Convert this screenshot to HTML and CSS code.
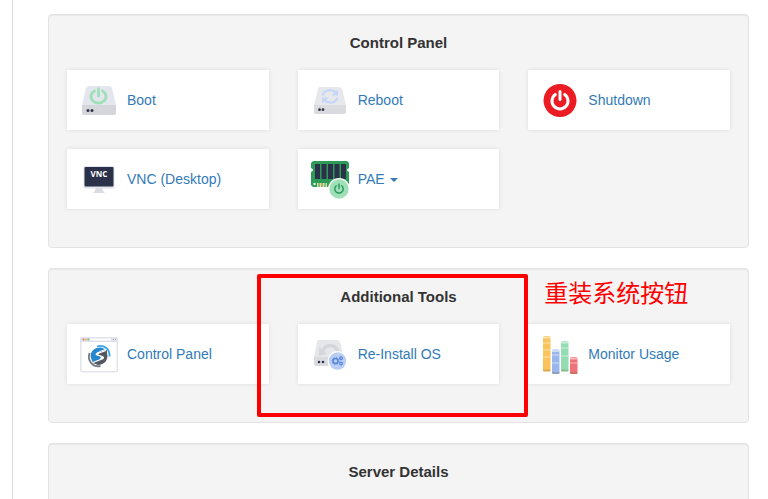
FILE: index.html
```html
<!DOCTYPE html>
<html lang="en">
<head>
    <meta charset="UTF-8">
    <meta name="viewport" content="width=device-width, initial-scale=1.0">
    <title>Control Panel</title>
    <link rel="stylesheet" href="styles.css">
</head>
<body>
    <main class="content">
        <section class="well">
            <h2>Control Panel</h2>
            <div class="tools">
                <a class="tool" href="#boot">
                    <svg class="icon" viewBox="0 0 40 40" aria-hidden="true">
                        <path d="M10 6h20q2 0 3 2l4 17v2H3v-2L7 8q1-2 3-2z" fill="#e3e6ec"/>
                        <path d="M3 25h34v8q0 2-2 2H5q-2 0-2-2z" fill="#d4d6dc"/>
                        <circle cx="9" cy="30.5" r="1.5" fill="#33364a"/>
                        <circle cx="13" cy="30.5" r="1.5" fill="#33364a"/>
                        <path d="M15.500 11A7.500 6.500 0 1 0 23.500 11M19.500 9v7" fill="none" stroke="#9fe0b9" stroke-width="2.800" stroke-linecap="round"/>
                    </svg>
                    <span>Boot</span>
                </a>
                <a class="tool" href="#reboot">
                    <svg class="icon" viewBox="0 0 40 40" aria-hidden="true">
                        <path d="M10 7h19q2 0 3 2l4 16v2H4v-2L8 9q0-2 2-2z" fill="#e7e8ec"/>
                        <path d="M4 25h32v7q0 2-2 2H6q-2 0-2-2z" fill="#d9dbdf"/>
                        <circle cx="9.500" cy="29.700" r="1.400" fill="#33364a"/>
                        <circle cx="13" cy="29.700" r="1.400" fill="#33364a"/>
                        <path d="M12.500 15.500C14 9.500 22 8.500 26 13M27.500 17.500C26 23.500 18 24 14 20" fill="none" stroke="#c5d6f8" stroke-width="2.200"/>
                        <path d="M28 9.500v6h-7zM12 23.500v-6h7z" fill="#c5d6f8"/>
                    </svg>
                    <span>Reboot</span>
                </a>
                <a class="tool" href="#shutdown">
                    <svg class="icon" viewBox="0 0 40 40" aria-hidden="true">
                        <circle cx="20" cy="20.500" r="16.500" fill="#ec1c24"/>
                        <path d="M15.300 14.500A8 8 0 1 0 24.700 14.500M20 11.500v8" fill="none" stroke="#fff" stroke-width="3" stroke-linecap="round"/>
                    </svg>
                    <span>Shutdown</span>
                </a>
                <a class="tool" href="#vnc">
                    <svg class="icon" viewBox="0 0 40 40" aria-hidden="true">
                        <path d="M17 28h6l1 4 2 2H14l2-2z" fill="#d8dbe1"/>
                        <rect x="4.500" y="7" width="31" height="22.500" rx="1.800" fill="#e1e4ea"/>
                        <rect x="5.500" y="8" width="29" height="19.500" rx="1" fill="#2b3149"/>
                        <text class="icon-text" x="20" y="18" text-anchor="middle">VNC</text>
                    </svg>
                    <span>VNC (Desktop)</span>
                </a>
                <button class="tool" type="button" aria-haspopup="true">
                    <svg class="icon" viewBox="0 0 40 40" aria-hidden="true">
                        <path d="M3 2h34l2 2v5q-2 1-2 2t2 2v15H3l-2-2V13q2-1 2-2T1 9V4z" fill="#2c9b58"/>
                        <path d="M5 5h5v15H5zM11.500 5h5v15h-5zM18 5h5v15h-5zM24.500 5h5v15h-5zM31 5h5v15h-5z" fill="#2b3149"/>
                        <path d="M7 24h10v4H7z" fill="#e9dda0"/>
                        <path d="M9 24v4M12 24v4M15 24v4" stroke="#2c9b58" stroke-width="1"/>
                        <circle cx="4.500" cy="25" r="1.300" fill="#d8f0df"/>
                        <circle cx="29" cy="30" r="11" fill="#fff"/>
                        <circle cx="29" cy="30" r="9.700" fill="#9fe0b9"/>
                        <path d="M26.300 26.700a4.200 4.200 0 1 0 5.400 0M29 25v4.500" fill="none" stroke="#2c9b58" stroke-width="1.500" stroke-linecap="round"/>
                    </svg>
                    <span>PAE <i class="caret"></i></span>
                </button>
            </div>
        </section>

        <section class="well">
            <h2>Additional Tools</h2>
            <div class="tools">
                <a class="tool" href="#panel">
                    <svg class="icon" viewBox="0 0 40 40" aria-hidden="true">
                        <rect x="1.800" y="3.800" width="36.500" height="34" rx="2" fill="#fff" stroke="#e2e4e8" stroke-width="1.500"/>
                        <path d="M3 3h34q2 0 2 2v3H1V5q0-2 2-2z" fill="#dfe2e8"/>
                        <rect x="11" y="4.500" width="21" height="2" rx="1" fill="#fff"/>
                        <circle cx="4.500" cy="5.500" r="1" fill="#ed7161"/>
                        <circle cx="7" cy="5.500" r="1" fill="#f1b661"/>
                        <circle cx="9.300" cy="5.500" r="1" fill="#75c78f"/>
                        <path d="M34 5.500h1M36 5.500h1" stroke="#a7abb5" stroke-width="1.200"/>
                        <path d="M18 12.500C25 10 31 15 30.500 22.500" fill="none" stroke="#35a7e5" stroke-width="1.800"/>
                        <path d="M10.500 19C8 27 14 33.500 21.500 32" fill="none" stroke="#777a80" stroke-width="1.800"/>
                        <path d="M12 24C10 18 16 13 22 13.500L26 15 18 18.500q-3 2 0 3l4 1q-1 5-8 6.500z" fill="#2687cf"/>
                        <path d="M28 19c2 7-3 12-9 12l-5-2 9-4q3-2 0-3l-4-1q1-4 9-5z" fill="#54575d"/>
                        <path d="M27 16.500l-7 2.500q-3 1.500 0 2.500l3 1q3 1 0 2.500l-9 3.500" fill="none" stroke="#fff" stroke-width="1.300"/>
                    </svg>
                    <span>Control Panel</span>
                </a>
                <div class="marked">
                    <a class="tool" href="#reinstall">
                        <svg class="icon" viewBox="0 0 40 40" aria-hidden="true">
                            <path d="M9 6h18q2 0 3 2l4 15v2H4v-2L7 8q0-2 2-2z" fill="#e6e7ea"/>
                            <path d="M4 23h30v9H6q-2 0-2-2z" fill="#d9dbdf"/>
                            <circle cx="9" cy="28" r="1.300" fill="#33364a"/>
                            <circle cx="13" cy="28" r="1.300" fill="#33364a"/>
                            <path d="M13 17C15 10 25 9 28 18" fill="none" stroke="#d3d6da" stroke-width="3.500"/>
                            <path d="M9 13v9l8-2z" fill="#d3d6da"/>
                            <circle cx="27.500" cy="27" r="10" fill="#fff"/>
                            <circle cx="27.500" cy="27" r="8.700" fill="#b9cdf5"/>
                            <g fill="none" stroke="#5b87d9">
                                <circle cx="25.500" cy="27" r="2.500" stroke-width="1.500"/>
                                <circle cx="25.500" cy="27" r="3.400" stroke-width="1" stroke-dasharray="1.300 1.400"/>
                                <circle cx="31" cy="24.300" r="1.300" stroke-width="1.300"/>
                                <circle cx="31" cy="29.500" r="1.300" stroke-width="1.300"/>
                            </g>
                        </svg>
                        <span>Re-Install OS</span>
                    </a>
                    <div class="mark">
                        <span class="mark-label" lang="zh-CN">重装系统按钮</span>
                    </div>
                </div>
                <a class="tool" href="#monitor">
                    <svg class="icon" viewBox="0 0 40 40" aria-hidden="true">
                        <rect x="3" y="2" width="7.500" height="35.500" rx="1.500" fill="#fac45c"/>
                        <rect x="12" y="15.500" width="7.500" height="24.500" rx="1.500" fill="#9ab6ec"/>
                        <rect x="21" y="7" width="7.500" height="30.500" rx="1.500" fill="#94dcb2"/>
                        <rect x="30" y="23" width="7.500" height="17" rx="1.500" fill="#ee7378"/>
                        <g fill="none" stroke="#fff" stroke-opacity=".5">
                            <path d="M3 3.500h7.500M12 17h7.500M21 8.500h7.500M30 24.500h7.500" stroke-width="2"/>
                            <path d="M3 9h7.500M3 16h7.500M3 23h7.500M12 21h7.500M12 29h7.500M21 14h7.500M21 22h7.500M30 29h7.500"/>
                        </g>
                        <path d="M3 36.500h7.500M12 39h7.500M21 36.500h7.500M30 39h7.500" stroke="#7a5a30" stroke-opacity=".25" stroke-width="2"/>
                    </svg>
                    <span>Monitor Usage</span>
                </a>
            </div>
        </section>

        <section class="well">
            <h2>Server Details</h2>
        </section>
    </main>
</body>
</html>
```

FILE: styles.css
```css
* {
    box-sizing: border-box;
}
body {
    margin: 0;
    background-color: #fff;
    font-family: "Helvetica Neue", Helvetica, "Liberation Sans", Arial, sans-serif;
    font-size: 14px;
    line-height: 20px;
    color: #333;
}
.content {
    display: flex;
    flex-direction: column;
    gap: 20px;
    min-height: 100vh;
    margin-left: 12px;
    padding: 14px 19px 0 35px;
    border-left: 1px solid #ddd;
}
.well {
    padding: 18px 18px 38px;
    background-color: #f4f4f4;
    border: 1px solid #e3e3e3;
    border-radius: 4px;
    box-shadow: inset 0 1px 1px rgba(0, 0, 0, 0.05);
}
h2 {
    margin: 0 0 17px;
    font-size: 15px;
    font-weight: bold;
    line-height: 20px;
    text-align: center;
}
.tools {
    display: grid;
    grid-template-columns: repeat(3, 1fr);
    gap: 19px 29px;
}
.tool {
    display: flex;
    align-items: center;
    gap: 8px;
    width: 100%;
    height: 60px;
    padding: 0 12px;
    border: none;
    background-color: #fff;
    box-shadow: 0 0 4px rgba(0, 0, 0, 0.1);
    font: inherit;
    color: #337ab7;
    text-align: left;
    text-decoration: none;
    cursor: pointer;
}
.tool:hover span {
    color: #23527c;
}
.icon {
    flex: none;
    width: 40px;
    height: 40px;
}
.icon-text {
    font-family: "Open Sans", sans-serif;
    font-size: 8px;
    font-weight: bold;
    fill: #fff;
}
.caret {
    display: inline-block;
    margin-left: 1px;
    vertical-align: middle;
    border-top: 4px solid;
    border-right: 4px solid transparent;
    border-left: 4px solid transparent;
}

/* Red frame round the re-install button */
.marked {
    position: relative;
}
.mark {
    position: absolute;
    z-index: 1;
    top: -50px;
    right: -29px;
    bottom: -33px;
    left: -41px;
    border: 4px solid #f00;
    border-radius: 2px;
    pointer-events: none;
}
.mark-label {
    position: absolute;
    top: 0;
    left: 100%;
    margin-left: 20px;
    font-family: "Songti SC", SimSun, "Noto Sans CJK SC", serif;
    font-size: 24px;
    line-height: 28px;
    color: #f00;
    white-space: nowrap;
}

/* The page scrolls without a visible bar */
html {
    scrollbar-width: none;
}
```
